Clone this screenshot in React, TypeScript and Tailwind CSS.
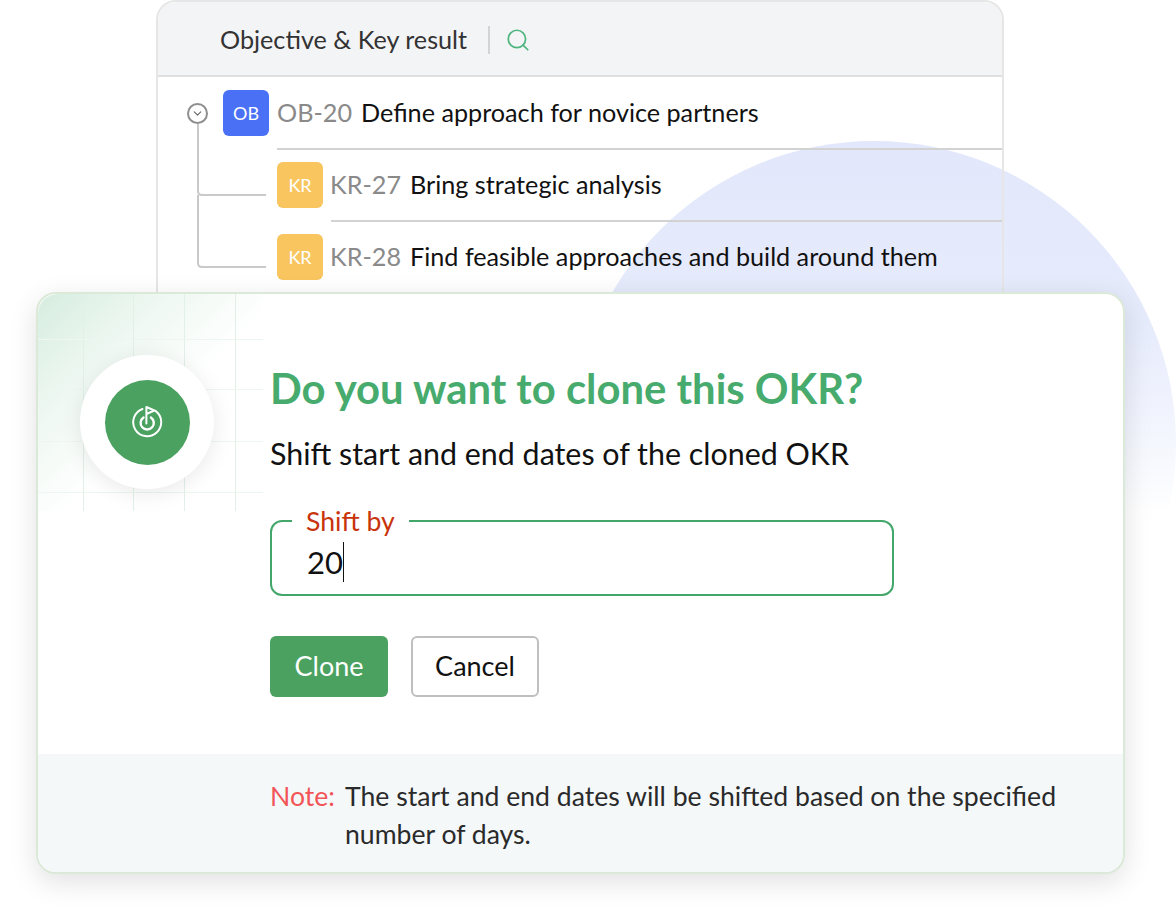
import React from 'react';
import { Search, ChevronDown } from 'lucide-react';

const rows = [
  { code: 'KR-27', title: 'Bring strategic analysis' },
  { code: 'KR-28', title: 'Find feasible approaches and build around them' },
];

const gridXs = [83, 133, 184, 235];
const gridYs = [339, 389, 441, 492];

const GoalIcon: React.FC = () => (
  <svg width="32" height="32" viewBox="0 0 32 32" fill="none" stroke="#fff" strokeWidth="2" strokeLinecap="round" strokeLinejoin="round">
    <path d="M11.5 3A14 14 0 1 0 24.5 4.9" />
    <path d="M12.5 11.4a6.6 6.6 0 1 0 7.4 0" strokeWidth="2.4" />
    <path d="M15.4 17.5V1l8 3.5-8 3.5" />
  </svg>
);

const TreeLines: React.FC = () => (
  <svg className="absolute left-[39px] top-[122px]" width="72" height="146" viewBox="0 0 72 146" fill="none" stroke="#c9c9c9" strokeWidth="2">
    <path d="M1 0v67q0 4 4 4h64" />
    <path d="M1 71v68q0 4 4 4h64" />
  </svg>
);

const KeyResultTable: React.FC = () => (
  <div className="absolute left-[156px] top-0 h-[300px] w-[848px] rounded-t-[20px] border-2 border-[#e6e6e6]">
    <div className="flex h-[75px] items-center rounded-t-[18px] border-b-2 border-[#dedfe0] bg-[#f3f4f6] pl-[62px] pt-[2px]">
      <span className="text-[25.2px] text-[#333]">Objective &amp; Key result</span>
      <span className="ml-[21px] h-[28px] w-[2px] bg-[#d4d4d4]" />
      <Search className="ml-[15px] h-[26px] w-[26px] text-[#4fb57f]" strokeWidth={1.6} />
    </div>
    <TreeLines />
    <div className="flex h-[71px] items-center pl-[29px] pt-[1px]">
      <span className="flex h-[21px] w-[21px] items-center justify-center rounded-full border-2 border-[#8e8e8e] bg-white">
        <ChevronDown className="h-[13px] w-[13px] text-[#666]" strokeWidth={2} />
      </span>
      <span className="ml-[15px] flex h-[46px] w-[46px] items-center justify-center rounded-[6px] bg-[#4a71f5] text-[18px] text-white">OB</span>
      <span className="ml-[8px] text-[25.2px] text-[#8a8a8a]">OB-20</span>
      <span className="ml-[9px] text-[25.2px] text-[#111]">Define approach for novice partners</span>
    </div>
    {rows.map((row, i) => (
      <div key={row.code} className={i === 0 ? 'ml-[119px] border-t-2 border-[#d2d2d2]' : 'ml-[119px]'}>
        <div className="flex h-[70px] items-center">
          <span className="flex h-[46px] w-[46px] items-center justify-center rounded-[6px] bg-[#f8c55f] text-[18px] text-white">KR</span>
          <span className="ml-[7px] text-[25.2px] text-[#8a8a8a]">{row.code}</span>
          <span className="ml-[9px] text-[25.2px] text-[#111]">{row.title}</span>
        </div>
        {i === 0 && <div className="ml-[54px] h-[2px] bg-[#d2d2d2]" />}
      </div>
    ))}
  </div>
);

const CornerGrid: React.FC = () => (
  <div className="absolute left-0 top-0 h-[217px] w-[225px] overflow-hidden rounded-tl-[20px]">
    <div className="absolute inset-0 bg-[linear-gradient(135deg,rgba(212,236,221,0.95)_0%,rgba(232,245,237,0.75)_28%,rgba(255,255,255,0)_56%)]" />
    {gridXs.map(x => (
      <div key={x} className="absolute top-0 h-full w-px bg-[#e2f1e8]" style={{ left: x - 38 }} />
    ))}
    {gridYs.map(y => (
      <div key={y} className="absolute left-0 h-px w-full bg-[#edf6f0]" style={{ top: y - 294 }} />
    ))}
  </div>
);

export default function App() {
  return (
    <div className="relative h-[916px] w-[1176px] overflow-hidden bg-white font-['Lato','Open_Sans',sans-serif]">
      {/* Backdrop circle */}
      <div className="absolute left-[572px] top-[141px] h-[604px] w-[604px] rounded-full bg-[linear-gradient(180deg,#e2e7fb_0%,#e6ebfc_30%,#f6f8fe_52%,#ffffff_62%)]" />

      <KeyResultTable />

      {/* Dialog */}
      <div className="absolute left-[36px] top-[292px] flex h-[582px] w-[1089px] flex-col overflow-visible rounded-[20px] border-2 border-[#dbe9d9] bg-white shadow-[0_8px_28px_rgba(0,0,0,0.12)]">
        <CornerGrid />
        <div className="relative flex flex-1">
          <div className="w-[232px] shrink-0 pl-[42px] pt-[61px]">
            <div className="flex h-[134px] w-[134px] items-center justify-center rounded-full bg-white shadow-[0_4px_22px_rgba(0,0,0,0.09)]">
              <div className="flex h-[85px] w-[85px] items-center justify-center rounded-full bg-[#4aa160]">
                <GoalIcon />
              </div>
            </div>
          </div>
          <div className="flex-1 pt-[66px]">
            <h1 className="text-[41.8px] font-bold leading-[56px] text-[#47ab6e]">Do you want to clone this OKR?</h1>
            <p className="mt-[16px] text-[30.4px] leading-[42px] text-[#111]">Shift start and end dates of the cloned OKR</p>
            <div className="relative mt-[46px] flex h-[76px] w-[624px] items-end rounded-[12px] border-2 border-[#43a76c] pb-[12px] pl-[35px]">
              <span className="absolute left-[20px] top-[-16px] bg-white px-[14px] text-[26.6px] leading-[30px] text-[#c8340c]">Shift by</span>
              <span className="border-r-[1.5px] border-[#111] text-[31px] leading-[40px] text-[#111]">20</span>
            </div>
            <div className="mt-[40px] flex gap-[23px]">
              <button className="h-[61px] w-[118px] rounded-[6px] bg-[#4aa160] text-[27px] text-white">Clone</button>
              <button className="h-[61px] w-[128px] rounded-[6px] border-2 border-[#bfbfbf] bg-white text-[27px] text-[#111]">Cancel</button>
            </div>
          </div>
        </div>
        <div className="flex h-[118px] rounded-b-[18px] bg-[#f4f8f9] pl-[232px] pt-[23px] text-[26.6px] leading-[38px]">
          <span className="w-[75px] shrink-0 text-[#f25557]">Note:</span>
          <p className="w-[730px] text-[#2a2a2a]">The start and end dates will be shifted based on the specified number of days.</p>
        </div>
      </div>
    </div>
  );
}
